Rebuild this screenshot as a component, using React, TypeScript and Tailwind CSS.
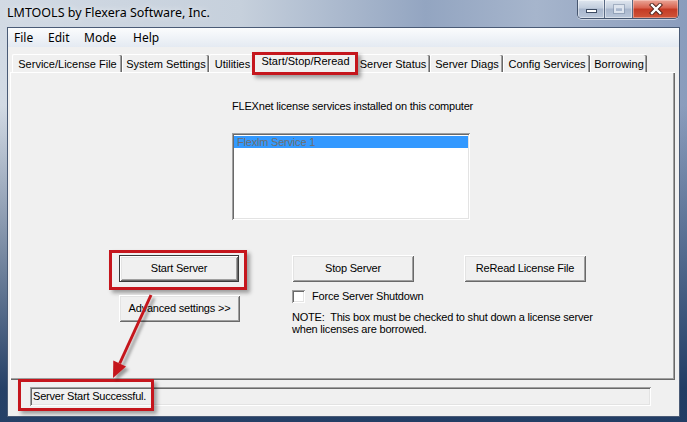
import React from "react";

const SANS = "font-['Liberation_Sans',Arial,sans-serif] text-[11px] text-black";
const TRK = "tracking-[-0.2px]";
const BTN =
  "bg-[#f0f0f0] shadow-[inset_1px_1px_0_#ffffff,inset_-1px_-1px_0_#696969,inset_2px_2px_0_#e3e3e3,inset_-2px_-2px_0_#a0a0a0]";
const SUNKEN =
  "shadow-[inset_1px_1px_0_#a0a0a0,inset_-1px_-1px_0_#ffffff,inset_2px_2px_0_#696969,inset_-2px_-2px_0_#e3e3e3]";
const REDBOX =
  "pointer-events-none absolute border-[3px] border-[#c5161d] shadow-[3px_3px_4px_rgba(0,0,0,0.35)]";

function Tab({ label, w }: { label: string; w: string }) {
  return (
    <div
      className={`${w} h-[18px] shrink-0 rounded-tl-[2px] rounded-tr-[2px] border-l border-t border-white bg-[#f0f0f0] pt-[3px] text-center leading-[13px] whitespace-nowrap shadow-[inset_-1px_0_0_#696969,inset_-2px_0_0_#a0a0a0]`}
    >
      {label}
    </div>
  );
}

function Button({
  label,
  w,
  isDefault,
  children,
}: {
  label: string;
  w: string;
  isDefault?: boolean;
  children?: React.ReactNode;
}) {
  return (
    <div
      className={`relative ${w} h-[27px] shrink-0 ${
        isDefault ? "border border-[#3a3a3a]" : ""
      }`}
    >
      <div className={`flex h-full w-full items-center justify-center ${BTN}`}>
        <span className={`leading-[13px] whitespace-nowrap ${TRK}`}>{label}</span>
      </div>
      {children}
    </div>
  );
}

function CaptionButtons() {
  return (
    <div className="flex h-[19px] overflow-hidden rounded-b-[5px] border border-t-0 border-[#46566f] shadow-[0_1px_0_rgba(255,255,255,0.5)]">
      <div className="flex w-[27px] items-end justify-center border-r border-[#5a6a84] bg-[linear-gradient(to_bottom,#dfe6ef,#c2cddd_45%,#a8b6cc_50%,#b9c6d9)] pb-[5px] shadow-[inset_0_0_0_1px_rgba(255,255,255,0.45)]">
        <div className="h-[4px] w-[11px] border border-[#3d4b62] bg-white" />
      </div>
      <div className="flex w-[28px] items-center justify-center border-r border-[#5a6a84] bg-[linear-gradient(to_bottom,#dfe6ef,#c2cddd_45%,#a8b6cc_50%,#b9c6d9)] shadow-[inset_0_0_0_1px_rgba(255,255,255,0.45)]">
        <div className="h-[8px] w-[10px] border-[2px] border-t-[3px] border-[#dde4ee] shadow-[0_0_0_1px_rgba(120,135,160,0.5)]" />
      </div>
      <div className="flex w-[45px] items-center justify-center bg-[linear-gradient(to_bottom,#eaa698,#d8604c_45%,#c43a24_50%,#d05538)] shadow-[inset_0_0_0_1px_rgba(255,220,210,0.45)]">
        <svg width="14" height="12" viewBox="0 0 14 12">
          <path d="M3 2 L11 10 M11 2 L3 10" stroke="#4a2018" strokeWidth="4.2" strokeLinecap="square" />
          <path d="M3 2 L11 10 M11 2 L3 10" stroke="#ffffff" strokeWidth="2.4" strokeLinecap="square" />
        </svg>
      </div>
    </div>
  );
}

export default function App() {
  return (
    <div className="relative h-[422px] w-[687px] overflow-hidden bg-[linear-gradient(to_bottom,rgba(30,60,100,0)_0%,rgba(30,60,100,0)_25%,rgba(28,56,96,0.95)_92%),linear-gradient(to_right,#d2dae4,#c6d0dc_35%,#93a5c1_62%,#a6b5cc_78%,#8a9cbc)]">
      {/* title bar */}
      <div className="flex h-[27px] items-start justify-between pr-[8px]">
        <div className="pl-[7px] pt-[5px] font-['Noto_Sans',sans-serif] text-[12.5px] leading-[16px] text-black [text-shadow:0_0_6px_rgba(255,255,255,0.9)]">
          LMTOOLS by Flexera Software, Inc.
        </div>
        <CaptionButtons />
      </div>

      {/* client area */}
      <div className="mx-[7px] w-[673px] border border-[#4a5b76] bg-[#f0f0f0]">
        <div className={`h-[388px] ${SANS}`}>
          {/* menu bar */}
          <div className="flex h-[19px] items-center bg-[linear-gradient(to_bottom,#fbfcfd,#e4eaf2)] pl-[6px] font-['Noto_Sans',sans-serif] text-[12px] leading-[16px]">
            <span className="w-[34px]">File</span>
            <span className="w-[36px]">Edit</span>
            <span className="w-[49px]">Mode</span>
            <span>Help</span>
          </div>

          {/* tabs + panel */}
          <div className="pl-[2px] pt-[5px]">
            <div className="flex h-[20px] items-end pl-[2px]">
              <Tab label="Service/License File" w="w-[110px]" />
              <Tab label="System Settings" w="w-[87px]" />
              <Tab label="Utilities" w="w-[46px]" />
              <div className="relative z-10 -mx-[2px] mb-[-1px] h-[21px] w-[104px] shrink-0 rounded-tl-[2px] rounded-tr-[2px] border-l border-t border-white bg-[#f0f0f0] pt-[2px] text-center leading-[13px] whitespace-nowrap shadow-[inset_-1px_0_0_#696969,inset_-2px_0_0_#a0a0a0]">
                Start/Stop/Reread
                <div className={`${REDBOX} left-[-2px] top-[-1px] h-[23px] w-[106px]`} />
              </div>
              <Tab label="Server Status" w="w-[75px]" />
              <Tab label="Server Diags" w="w-[73px]" />
              <Tab label="Config Services" w="w-[87px]" />
              <Tab label="Borrowing" w="w-[57px]" />
            </div>

            <div className="h-[308px] w-[665px] bg-[#f0f0f0] pt-[28px] shadow-[inset_1px_1px_0_#ffffff,inset_-1px_-1px_0_#696969,inset_-2px_-2px_0_#a0a0a0]">
              <div className="ml-[222px]">
                <div className={`leading-[13px] whitespace-nowrap ${TRK}`}>
                  FLEXnet license services installed on this computer
                </div>
                <div className={`mt-[20px] h-[87px] w-[238px] bg-white p-[2px] ${SUNKEN}`}>
                  <div className={`mt-[1px] h-[12px] bg-[#3399ff] pl-[3px] leading-[12px] text-[#6e6e6e] ${TRK}`}>
                    Flexlm Service 1
                  </div>
                </div>
              </div>

              <div className="ml-[109px] mt-[35px] flex">
                <Button label="Start Server" w="w-[120px]" isDefault>
                  <div className={`${REDBOX} left-[-11px] top-[-6px] h-[40px] w-[138px]`} />
                </Button>
                <div className="ml-[53px]">
                  <Button label="Stop Server" w="w-[122px]" />
                </div>
                <div className="ml-[50px]">
                  <Button label="ReRead License File" w="w-[122px]" />
                </div>
              </div>

              <div className="ml-[109px] flex items-start">
                <div className="mt-[13px]">
                  <Button label="Advanced settings >>" w="w-[121px]" />
                </div>
                <div className={`ml-[52px] mt-[8px] ${TRK}`}>
                  <div className="flex h-[13px] items-center">
                    <div className={`h-[13px] w-[13px] bg-white ${SUNKEN}`} />
                    <span className="ml-[7px] leading-[13px]">Force Server Shutdown</span>
                  </div>
                  <div className="mt-[8px] leading-[12px] whitespace-pre">
                    {"NOTE:  This box must be checked to shut down a license server\nwhen licenses are borrowed."}
                  </div>
                </div>
              </div>
            </div>
          </div>

          {/* status */}
          <div className={`relative ml-[22px] mt-[7px] flex h-[19px] w-[621px] items-center pl-[3px] ${SUNKEN}`}>
            <span className={`leading-[13px] ${TRK}`}>Server Start Successful.</span>
            <div className={`${REDBOX} left-[-12px] top-[-8px] h-[32px] w-[136px]`} />
          </div>
        </div>
      </div>

      {/* arrow annotation */}
      <svg className="pointer-events-none absolute left-0 top-0" width="687" height="422" viewBox="0 0 687 422">
        <defs>
          <filter id="sh" x="-50%" y="-50%" width="200%" height="200%">
            <feDropShadow dx="3" dy="3" stdDeviation="1.6" floodColor="#000" floodOpacity="0.35" />
          </filter>
        </defs>
        <g filter="url(#sh)">
          <line x1="151" y1="295" x2="119.7" y2="363.5" stroke="#c5161d" strokeWidth="3" />
          <polygon points="113,378 126,366.4 113.3,360.6" fill="#c5161d" />
        </g>
      </svg>
    </div>
  );
}
